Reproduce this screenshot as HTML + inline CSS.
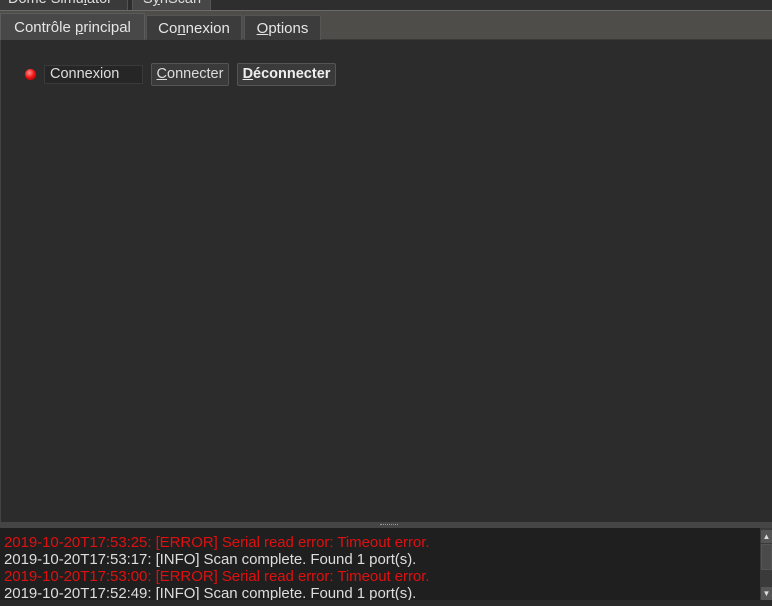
<!DOCTYPE html>
<html><head><style>
*{margin:0;padding:0;box-sizing:border-box}
body{width:772px;height:606px;background:#2e2e2e;font-family:"Liberation Sans",sans-serif;color:#ddd;position:relative;overflow:hidden;font-size:14px}
.a{position:absolute}
u{text-decoration:underline}
.tab{position:absolute;border:1px solid #555;border-bottom:none;background:#3c3c3c;color:#e6e6e6;font-size:15px;padding-top:4px;text-align:center}
.log div{height:17px;line-height:17px;white-space:nowrap;font-size:15px;letter-spacing:-0.05px}
.r{color:#e01010}
</style></head><body>
<div class="a" style="left:0;top:0;width:128px;height:10px;background:#3a3a3a;border-right:1px solid #555"></div>
<div class="a" style="left:8px;top:-9px;font-size:14.5px;color:#ddd">Dome Simu<u>l</u>ator</div>
<div class="a" style="left:132px;top:0;width:79px;height:11px;background:#474747;border:1px solid #555;border-top:none"></div>
<div class="a" style="left:143px;top:-9px;font-size:14.5px;color:#ddd">S<u>y</u>nScan</div>
<div class="a" style="left:0;top:10px;width:772px;height:31px;background:#4e4d4a;border-top:1px solid #6a6a6a;border-bottom:2px solid #3a3a3a"></div>
<div class="tab" style="left:0;top:13px;width:145px;height:28px;background:#484848;border-color:#5c5c5c;padding-top:5px">Contrôle <u>p</u>rincipal</div>
<div class="tab" style="left:146px;top:15px;width:96px;height:25px">Co<u>n</u>nexion</div>
<div class="tab" style="left:244px;top:15px;width:77px;height:25px"><u>O</u>ptions</div>
<div class="a" style="left:0;top:40px;width:772px;height:482px;background:#2c2c2c;border-left:1px solid #444"></div>
<div class="a" style="left:25px;top:69px;width:11px;height:11px;border-radius:50%;background:radial-gradient(circle at 40% 35%,#ff9090,#f01010 50%,#900 100%)"></div>
<div class="a" style="left:44px;top:65px;width:99px;height:19px;background:#262626;border:1px solid #3a3a3a;padding-left:5px;line-height:17px;font-size:14.5px;color:#ddd">Connexion</div>
<div class="a" style="left:151px;top:63px;width:78px;height:23px;background:#3a3a3a;border:1px solid #555;border-radius:2px;text-align:center;line-height:21px;font-size:14.5px;color:#ddd;white-space:nowrap"><u>C</u>onnecter</div>
<div class="a" style="left:237px;top:63px;width:99px;height:23px;background:#3a3a3a;border:1px solid #555;border-radius:2px;text-align:center;line-height:21px;font-size:14.5px;font-weight:bold;color:#eee;white-space:nowrap"><u>D</u>éconnecter</div>
<div class="a" style="left:0;top:522px;width:772px;height:6px;background:#454545"></div>
<div class="a" style="left:380px;top:524px;width:18px;height:2px;border-top:1px dotted #999"></div>
<div class="a log" style="left:0;top:528px;width:760px;height:72px;background:#1f1f1f;padding-left:4px;padding-top:6px;overflow:hidden">
<div class="r">2019-10-20T17:53:25: [ERROR] Serial read error: Timeout error.</div>
<div>2019-10-20T17:53:17: [INFO] Scan complete. Found 1 port(s).</div>
<div class="r">2019-10-20T17:53:00: [ERROR] Serial read error: Timeout error.</div>
<div>2019-10-20T17:52:49: [INFO] Scan complete. Found 1 port(s).</div>
</div>
<div class="a" style="left:760px;top:528px;width:12px;height:72px;background:#3a3a3a"></div>
<div class="a" style="left:761px;top:530px;width:11px;height:13px;background:#555;color:#ddd;font-size:8px;text-align:center;line-height:13px">▲</div>
<div class="a" style="left:761px;top:544px;width:11px;height:26px;background:#4a4a4a;border:1px solid #555"></div>
<div class="a" style="left:761px;top:587px;width:11px;height:13px;background:#555;color:#ddd;font-size:8px;text-align:center;line-height:13px">▼</div>
<div class="a" style="left:0;top:600px;width:772px;height:6px;background:#2a2a2a"></div>
</body></html>
